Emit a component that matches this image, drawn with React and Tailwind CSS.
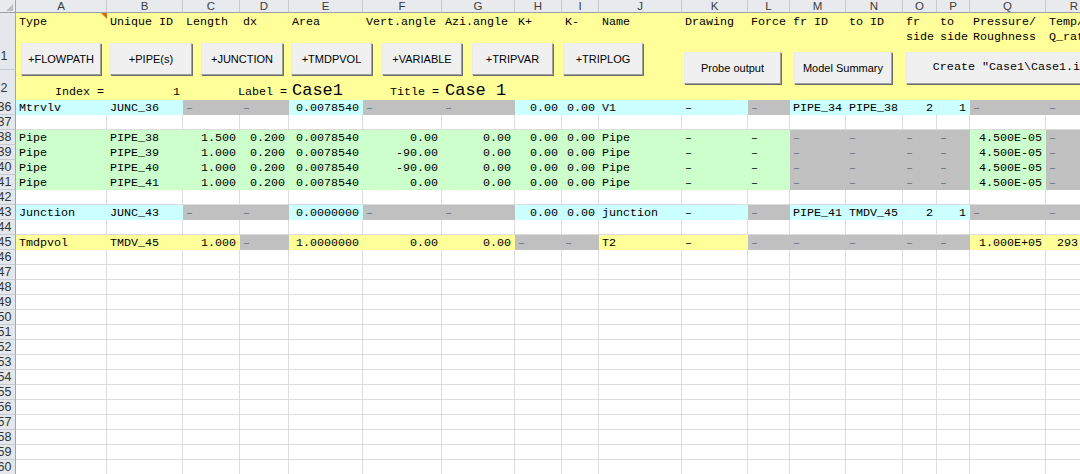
import React from 'react';

const GRID =
  'grid grid-cols-[16px_91px_76px_57px_49px_74px_79px_73px_47px_37px_83px_66px_42px_56px_57px_34px_33px_76px_57px_60px]';
const LETTERS = 'ABCDEFGHIJKLMNOPQRS'.split('');

const FILL = {
  w: 'bg-white border-[#dadcdd]',
  y: 'bg-[#ffff99] border-[#ffff99]',
  c: 'bg-[#ccffff] border-[#ccffff]',
  g: 'bg-[#ccffcc] border-[#ccffcc]',
  x: 'bg-[#c0c0c0] border-[#c0c0c0] text-[#5b6f82]',
};

const D = ['x', '–'];
const W = ['w', ''];

const pipe = (id, len, vang) => [
  ['g', 'Pipe'],
  ['g', id],
  ['g', len, 'r'],
  ['g', '0.200', 'r'],
  ['g', '0.0078540', 'r'],
  ['g', vang, 'r'],
  ['g', '0.00', 'r'],
  ['g', '0.00', 'r'],
  ['g', '0.00', 'r'],
  ['g', 'Pipe'],
  ['g', '–'],
  ['g', '–'],
  D, D, D, D,
  ['g', '4.500E-05', 'r'],
  D,
  W,
];

const blank = () => LETTERS.map(() => W);

const ROWS = [
  [36, [
    ['c', 'Mtrvlv'], ['c', 'JUNC_36'], D, D, ['c', '0.0078540', 'r'], D, D,
    ['c', '0.00', 'r'], ['c', '0.00', 'r'], ['c', 'V1'], ['c', '–'], D,
    ['c', 'PIPE_34'], ['c', 'PIPE_38'], ['c', '2', 'r'], ['c', '1', 'r'], D, D, W,
  ]],
  [37, blank()],
  [38, pipe('PIPE_38', '1.500', '0.00')],
  [39, pipe('PIPE_39', '1.000', '-90.00')],
  [40, pipe('PIPE_40', '1.000', '-90.00')],
  [41, pipe('PIPE_41', '1.000', '0.00')],
  [42, blank()],
  [43, [
    ['c', 'Junction'], ['c', 'JUNC_43'], D, D, ['c', '0.0000000', 'r'], D, D,
    ['c', '0.00', 'r'], ['c', '0.00', 'r'], ['c', 'junction'], ['c', '–'], D,
    ['c', 'PIPE_41'], ['c', 'TMDV_45'], ['c', '2', 'r'], ['c', '1', 'r'], D, D, W,
  ]],
  [44, blank()],
  [45, [
    ['y', 'Tmdpvol'], ['y', 'TMDV_45'], ['y', '1.000', 'r'], D, ['y', '1.0000000', 'r'],
    ['y', '0.00', 'r'], ['y', '0.00', 'r'], D, D, ['y', 'T2'], ['y', '–'], D,
    D, D, D, D, ['y', '1.000E+05', 'r'], ['y', '293.15', 'r'], W,
  ]],
];
for (let n = 46; n <= 61; n++) ROWS.push([n, blank()]);

const HEADS = [
  'Type', 'Unique ID', 'Length', 'dx', 'Area', 'Vert.angle', 'Azi.angle', 'K+', 'K-',
  'Name', 'Drawing', 'Force', 'fr ID', 'to ID', 'fr\nside', 'to\nside',
  'Pressure/\nRoughness', 'Temp/\nQ_rate', '',
];

const BUTTONS = [
  ['+FLOWPATH', 'left-[21px] top-[43px] w-[80px]'],
  ['+PIPE(s)', 'left-[110px] top-[43px] w-[82px]'],
  ['+JUNCTION', 'left-[201px] top-[43px] w-[82px]'],
  ['+TMDPVOL', 'left-[291px] top-[43px] w-[81px]'],
  ['+VARIABLE', 'left-[382px] top-[43px] w-[80px]'],
  ['+TRIPVAR', 'left-[472px] top-[43px] w-[81px]'],
  ['+TRIPLOG', 'left-[563px] top-[43px] w-[80px]'],
  ['Probe output', 'left-[684px] top-[52px] w-[97px]'],
  ['Model Summary', 'left-[794px] top-[52px] w-[98px]'],
];

const RowHead = ({ n, className = '' }) => (
  <div
    className={`overflow-hidden bg-[#e4e8ed] border-r border-b border-r-[#9ea6b0] border-b-[#c5cbd3] font-['Liberation_Sans',Arial,sans-serif] text-[12.5px] text-[#333] ${className}`}
  >
    <div className="-ml-[7px] w-[23px] text-center">{n}</div>
  </div>
);

const Cell = ({ spec }) => {
  const [fill, text, align] = spec;
  return (
    <div
      className={`h-[15px] border-r border-b whitespace-nowrap pt-[2px] leading-[13px] ${
        align === 'r' ? 'text-right pr-[3px]' : 'pl-[3px]'
      } ${FILL[fill]}`}
    >
      {text}
    </div>
  );
};

const Button = ({ label, pos, mono }) => (
  <div
    className={`absolute h-[32px] flex items-center justify-center bg-[#f0f0f0] border border-t-[#ebebeb] border-l-[#ebebeb] border-r-[#a0a0a0] border-b-[#a0a0a0] shadow-[1px_1px_0_#6d6d6d] whitespace-nowrap text-black ${
      mono ? "font-['Liberation_Mono',monospace] text-[11.7px]" : "font-['Liberation_Sans',Arial,sans-serif] text-[11px]"
    } ${pos}`}
  >
    {label}
  </div>
);

export default function App() {
  return (
    <div className="relative w-[1080px] h-[474px] overflow-hidden bg-white font-['Liberation_Mono','Courier_New',monospace] text-[11.7px] text-black">
      {/* column letters */}
      <div className={`${GRID} h-[13px]`}>
        <div className="relative bg-[#e8eaed] border-r border-b border-r-[#9ea6b0] border-b-[#9aa2ac]">
          <svg className="absolute right-[2px] bottom-[1px]" width="7" height="7" viewBox="0 0 7 7">
            <polygon points="7,0 7,7 0,7" fill="#b9bec5" />
          </svg>
        </div>
        {LETTERS.map((l) => (
          <div
            key={l}
            className="flex items-center justify-center bg-[#e8eaed] border-r border-b border-r-[#c6c9ce] border-b-[#9aa2ac] font-['Liberation_Sans',Arial,sans-serif] text-[11.5px] leading-[12px] text-[#3c3c3c]"
          >
            {l}
          </div>
        ))}
      </div>

      {/* row 1: headings */}
      <div className={`${GRID} h-[57px]`}>
        <RowHead n={1} className="flex items-end pb-[3px]" />
        {HEADS.map((h, i) => (
          <div key={i} className="relative bg-[#ffff99] pl-[3px] pt-[2px] leading-[15px] whitespace-pre">
            {h}
            {i === 0 && (
              <svg className="absolute right-0 top-0" width="6" height="6" viewBox="0 0 6 6">
                <polygon points="0,0 6,0 6,6" fill="#d86a1c" />
              </svg>
            )}
          </div>
        ))}
      </div>

      {/* row 2: index / label / title */}
      <div className={`${GRID} h-[30px] border-b border-b-[#7a7a7a]`}>
        <RowHead n={2} className="flex items-end pb-[2px] border-b-0" />
        <div className="bg-[#ffff99] text-right pr-[3px] pt-[15px] leading-[15px] whitespace-nowrap">Index =</div>
        <div className="bg-[#ffff99] text-right pr-[3px] pt-[15px] leading-[15px]">1</div>
        <div className="bg-[#ffff99]" />
        <div className="bg-[#ffff99] flex justify-end pr-[2px] pt-[15px] leading-[15px] whitespace-nowrap">Label =</div>
        <div className="bg-[#ffff99] pl-[3px] pt-[11px] text-[17px] leading-[19px] whitespace-nowrap">Case1</div>
        <div className="bg-[#ffff99] flex justify-end pr-[3px] pt-[15px] leading-[15px] whitespace-nowrap">Title =</div>
        <div className="bg-[#ffff99] pl-[3px] pt-[11px] text-[17px] leading-[19px] whitespace-nowrap">Case 1</div>
        {LETTERS.slice(7).map((l) => (
          <div key={l} className="bg-[#ffff99]" />
        ))}
      </div>

      {/* data rows */}
      {ROWS.map(([n, cells]) => (
        <div key={n} className={`${GRID} h-[15px]`}>
          <RowHead n={n} className="h-[15px] leading-[14px]" />
          {cells.map((c, i) => (
            <Cell key={i} spec={c} />
          ))}
        </div>
      ))}

      {/* form buttons floating over the sheet */}
      {BUTTONS.map(([label, pos]) => (
        <Button key={label} label={label} pos={pos} />
      ))}
      <Button label={'Create "Case1\\Case1.i"'} pos="left-[906px] top-[52px] w-[208px]" mono />
    </div>
  );
}
